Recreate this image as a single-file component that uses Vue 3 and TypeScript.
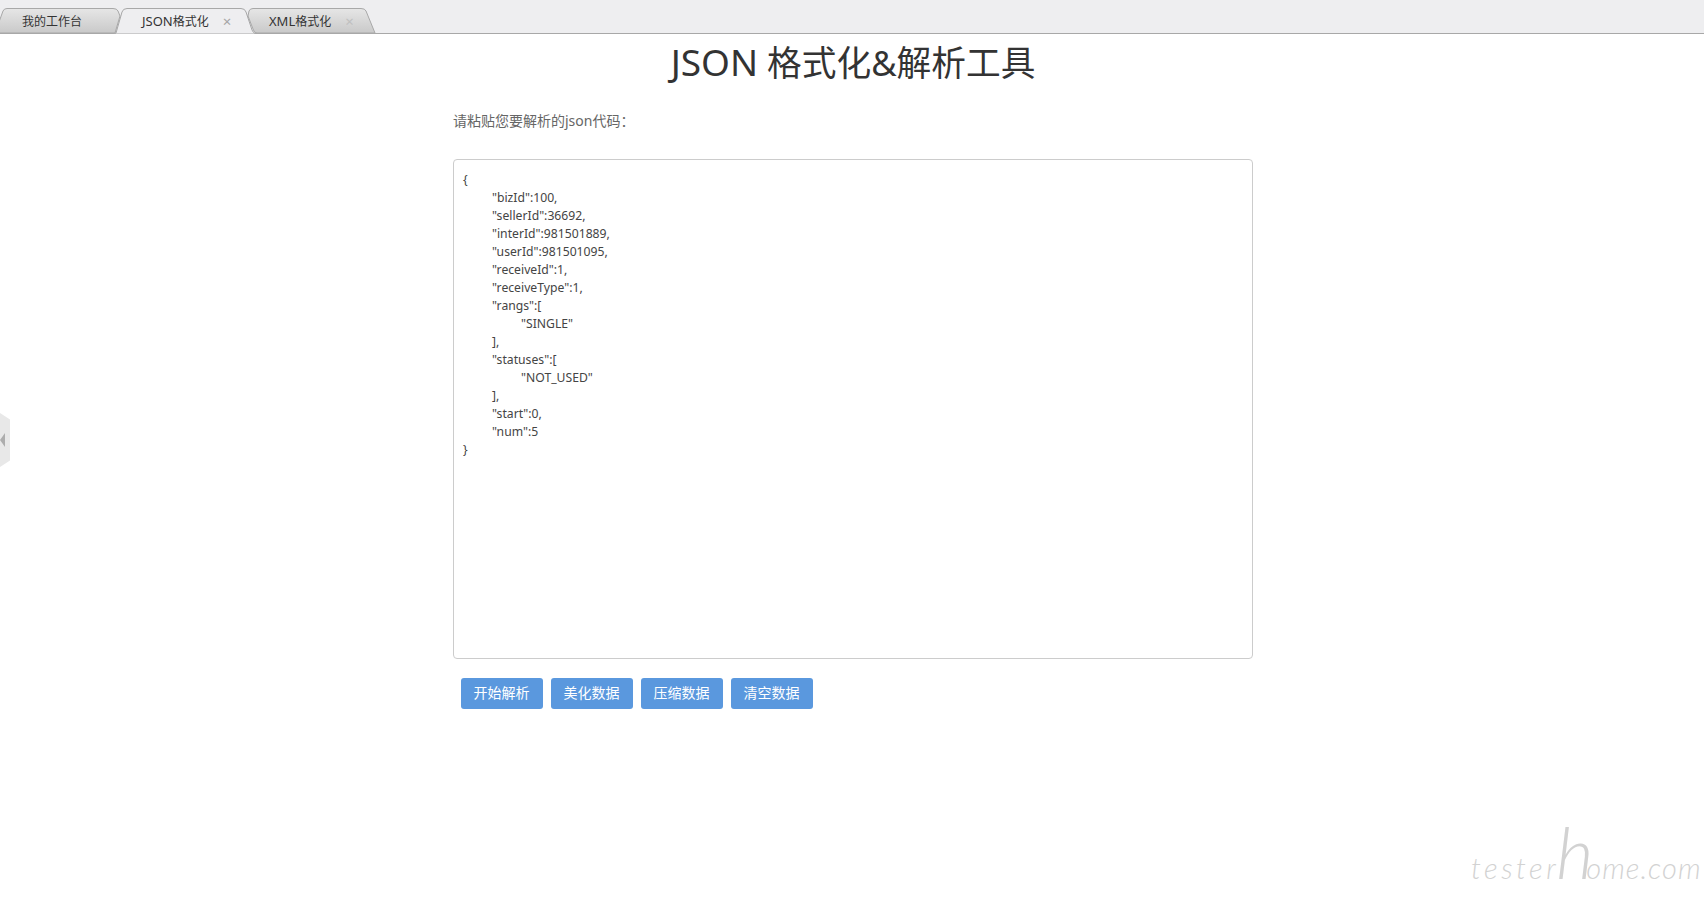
<script setup lang="ts">
const json = `{
\t"bizId":100,
\t"sellerId":36692,
\t"interId":981501889,
\t"userId":981501095,
\t"receiveId":1,
\t"receiveType":1,
\t"rangs":[
\t\t"SINGLE"
\t],
\t"statuses":[
\t\t"NOT_USED"
\t],
\t"start":0,
\t"num":5
}`
const buttons: string[] = ['开始解析', '美化数据', '压缩数据', '清空数据']
</script>

<template>
  <div class="page">
    <header class="tabbar">
      <svg class="tab-shapes" width="400" height="34" viewBox="0 0 400 34" aria-hidden="true">
        <defs>
          <linearGradient id="tabGrey" x1="0" y1="0" x2="0" y2="1">
            <stop offset="0" stop-color="#e6e6e6" />
            <stop offset="1" stop-color="#c9c9c9" />
          </linearGradient>
        </defs>
        <path d="M-1 22 L3 11 Q4 8.500 7 8.500 L113 8.500 Q117 8.500 118 11 L120 16 L115 33 L-1 33 Z" fill="url(#tabGrey)" stroke="#a8a8a8" />
        <path d="M249 11 Q250 8.500 253 8.500 L361 8.500 Q365 8.500 366 11 L375 33 L257 33 Q254 33 253 29 L248 16 Z" fill="url(#tabGrey)" stroke="#a8a8a8" />
        <path d="M114 34 L116 33 L122 12 Q123 8.500 127 8.500 L241 8.500 Q245 8.500 246 12 L252 30 Q253 33 256 34 Z" fill="#eeeef0" stroke="#a8a8a8" />
      </svg>
      <nav class="tabs">
        <span class="tab first">我的工作台</span>
        <span class="tab active"><span class="latin">JSON</span>格式化<i class="close">×</i></span>
        <span class="tab last"><span class="latin">XML</span>格式化<i class="close faint">×</i></span>
      </nav>
    </header>

    <main class="content">
      <h1 class="title"><span class="title-latin">JSON</span> 格式化&amp;解析工具</h1>
      <p class="prompt">请粘贴您要解析的json代码：</p>
      <textarea class="code" readonly spellcheck="false">{{ json }}</textarea>
      <div class="actions">
        <button v-for="label in buttons" :key="label" class="btn" type="button">{{ label }}</button>
      </div>
    </main>

    <div class="handle" aria-hidden="true"><span class="arrow"></span></div>
    <div class="watermark"><span class="wm-start">tester</span><span class="big-h">h</span><span class="wm-end">ome.com</span></div>
  </div>
</template>

<style>
html, body { margin: 0; background: #fff; }
</style>

<style scoped>
.page {
  position: relative;
  width: 1704px;
  height: 905px;
  overflow: hidden;
  background: #fff;
  font-family: "Noto Sans", "Noto Sans CJK SC", sans-serif;
  color: #333;
}
.tabbar {
  position: relative;
  height: 33px;
  background: #eeeef0;
  border-bottom: 1px solid #a8a8a8;
}
.tab-shapes {
  position: absolute;
  left: 0;
  top: 0;
}
.tabs {
  position: relative;
  display: flex;
  height: 33px;
}
.tab {
  box-sizing: border-box;
  display: flex;
  align-items: center;
  height: 33px;
  padding-top: 9px;
  font-size: 12px;
  color: #333;
  white-space: nowrap;
}
.latin { font-size: 13px; }
.first { width: 115px; padding-left: 22px; }
.active { width: 137px; padding-left: 27px; }
.last { width: 123px; padding-left: 17px; }
.close {
  margin-left: 14px;
  font-style: normal;
  font-size: 15px;
  color: #a5a5a5;
}
.faint { color: #c0c0c0; }
.content {
  width: 800px;
  margin-left: 453px;
}
.title {
  margin: 3px 0 0;
  text-align: center;
  font-size: 34.700px;
  font-weight: 400;
  line-height: 50px;
  color: #333;
}
.title-latin {
  font-size: 37px;
}
.prompt {
  margin: 23px 0 0;
  font-size: 14px;
  line-height: 20px;
  color: #666;
}
.code {
  display: block;
  box-sizing: border-box;
  width: 800px;
  height: 500px;
  margin-top: 28px;
  padding: 11px 9px;
  border: 1px solid #ccc;
  border-radius: 4px;
  outline: none;
  resize: none;
  overflow: hidden;
  font-family: "Noto Sans", "Noto Sans CJK SC", sans-serif;
  font-size: 12.200px;
  line-height: 18px;
  tab-size: 29px;
  color: #444;
  background: #fff;
}
.actions {
  display: flex;
  gap: 8px;
  margin-top: 19px;
  padding-left: 8px;
}
.btn {
  width: 82px;
  height: 31px;
  padding: 0 1px 4px 0;
  border: none;
  border-radius: 3px;
  background: #5a98de;
  color: #fff;
  font-family: inherit;
  font-size: 14px;
}
.handle {
  position: absolute;
  left: 0;
  top: 413px;
  width: 10px;
  height: 54px;
  background: #e8e8e8;
  clip-path: polygon(0 0, 100% 12%, 100% 88%, 0 100%);
}
.arrow {
  position: absolute;
  left: 0;
  top: 20px;
  width: 0;
  height: 0;
  border-top: 7px solid transparent;
  border-bottom: 7px solid transparent;
  border-right: 5px solid #adadad;
}
.watermark {
  position: absolute;
  left: 1471px;
  top: 848px;
  font-family: "Lato", sans-serif;
  font-style: italic;
  font-weight: 300;
  font-size: 29px;
  line-height: 40px;
  color: #d2d2d2;
  white-space: nowrap;
}
.wm-start {
  letter-spacing: 3.500px;
}
.wm-end {
  letter-spacing: 1px;
}
.big-h {
  margin: 0 -7px 0 -3px;
  font-size: 72px;
  line-height: 0;
}
</style>
